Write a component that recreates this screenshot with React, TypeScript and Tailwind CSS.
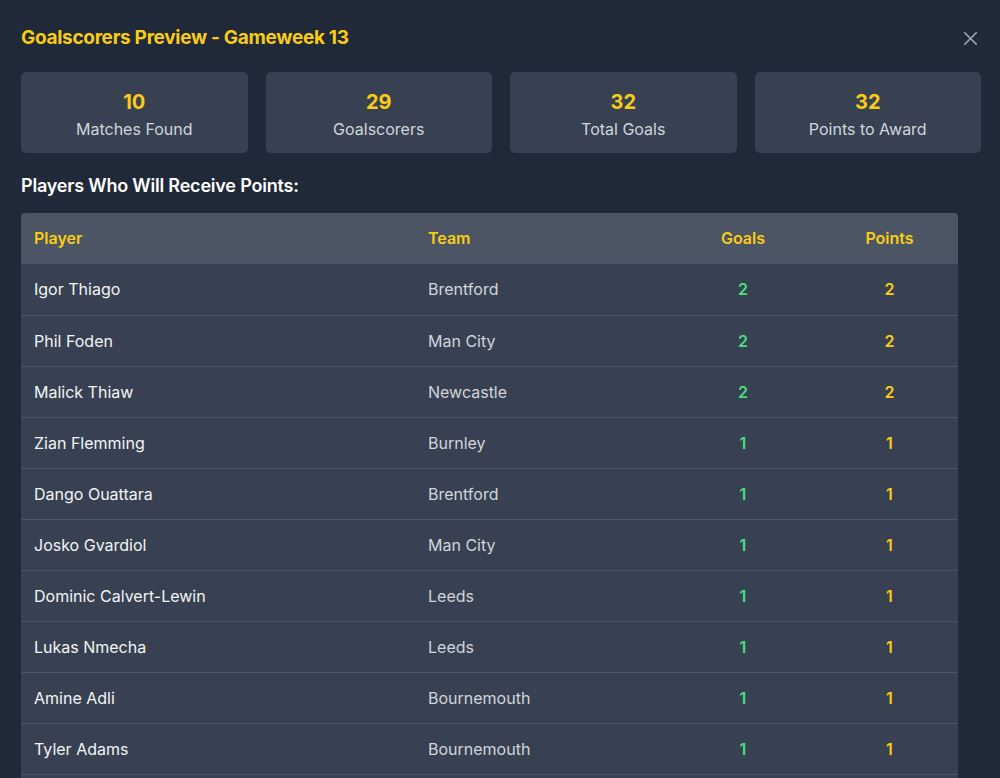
import { X } from "lucide-react";

const stats = [
  { value: 10, label: "Matches Found" },
  { value: 29, label: "Goalscorers" },
  { value: 32, label: "Total Goals" },
  { value: 32, label: "Points to Award" },
];

const scorers = [
  { name: "Igor Thiago", team: "Brentford", goals: 2, points: 2 },
  { name: "Phil Foden", team: "Man City", goals: 2, points: 2 },
  { name: "Malick Thiaw", team: "Newcastle", goals: 2, points: 2 },
  { name: "Zian Flemming", team: "Burnley", goals: 1, points: 1 },
  { name: "Dango Ouattara", team: "Brentford", goals: 1, points: 1 },
  { name: "Josko Gvardiol", team: "Man City", goals: 1, points: 1 },
  { name: "Dominic Calvert-Lewin", team: "Leeds", goals: 1, points: 1 },
  { name: "Lukas Nmecha", team: "Leeds", goals: 1, points: 1 },
  { name: "Amine Adli", team: "Bournemouth", goals: 1, points: 1 },
  { name: "Tyler Adams", team: "Bournemouth", goals: 1, points: 1 },
];

export default function App() {
  return (
    <div
      className="h-screen overflow-hidden bg-[#1f2937] pl-[21px] pr-[19px] pt-[24px]"
      style={{ fontFamily: "Inter, 'Noto Sans', sans-serif" }}
    >
      {/* Header */}
      <div className="flex h-[28px] items-center justify-between">
        <h2 className="text-[19px] font-bold tracking-[-0.3px] text-[#facc15]">
          Goalscorers Preview - Gameweek 13
        </h2>
        <button className="-mr-[1px] text-[#9ca3af]">
          <X size={23} strokeWidth={1.8} />
        </button>
      </div>

      {/* Stats */}
      <div className="mt-[20px] grid grid-cols-4 gap-[18px]">
        {stats.map((s) => (
          <div
            key={s.label}
            className="flex h-[81px] flex-col items-center justify-center rounded-[5px] bg-[#374151] pt-[5px]"
          >
            <span className="text-[20px] font-bold leading-[24px] text-[#facc15]">{s.value}</span>
            <span className="mt-[4px] text-[16px] leading-[22px] text-[#d1d5db]">{s.label}</span>
          </div>
        ))}
      </div>

      <h3 className="mt-[21px] text-[18px] font-semibold leading-[24px] tracking-[-0.2px] text-white">
        Players Who Will Receive Points:
      </h3>

      {/* Table */}
      <div className="mt-[15px] w-[937px] overflow-hidden rounded-t-[4px]">
        <table className="w-full table-fixed border-collapse text-[16px]">
          <colgroup>
            <col className="w-[394px]" />
            <col className="w-[254px]" />
            <col className="w-[148px]" />
            <col className="w-[141px]" />
          </colgroup>
          <thead>
            <tr className="h-[51px] bg-[#4b5563] text-[#facc15]">
              <th className="px-[13px] pb-[2px] text-left font-semibold">Player</th>
              <th className="px-[13px] pb-[2px] text-left font-semibold">Team</th>
              <th className="pb-[2px] text-center font-semibold">Goals</th>
              <th className="pb-[2px] pl-[4px] text-center font-semibold">Points</th>
            </tr>
          </thead>
          <tbody>
            {scorers.map((p) => (
              <tr key={p.name} className="h-[51px] border-b border-[#4b5563] bg-[#374151]">
                <td className="px-[13px] text-[#f3f4f6]">{p.name}</td>
                <td className="px-[13px] text-[#d1d5db]">{p.team}</td>
                <td className="text-center font-semibold text-[#4ade80]">{p.goals}</td>
                <td className="pl-[4px] text-center font-semibold text-[#facc15]">{p.points}</td>
              </tr>
            ))}
            <tr className="h-[51px] bg-[#374151]">
              <td colSpan={4} />
            </tr>
          </tbody>
        </table>
      </div>
    </div>
  );
}
